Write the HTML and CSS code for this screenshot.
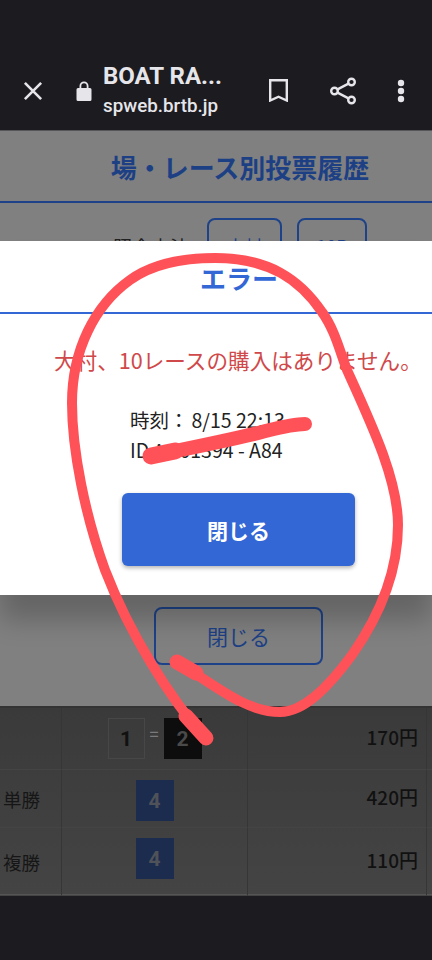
FILE: index.html
```html
<!DOCTYPE html>
<html lang="ja">
<head>
<meta charset="utf-8">
<title>BOAT RACE</title>
<link rel="stylesheet" href="styles.css">
</head>
<body>
<div class="screen">
  <header class="topbar">
    <svg class="ico ico-close" viewBox="0 0 24 24"><path d="M4.500 4.500l15 15M19.500 4.500l-15 15"/></svg>
    <svg class="ico ico-lock" viewBox="0 0 16 20"><path class="solid" d="M3.500 7V5a4.500 4.500 0 0 1 9 0v2h-1.800V5a2.700 2.700 0 0 0-5.400 0v2zM2 7h12a1.500 1.500 0 0 1 1.500 1.500v10A1.500 1.500 0 0 1 14 20H2A1.500 1.500 0 0 1 .5 18.500v-10A1.500 1.500 0 0 1 2 7z"/></svg>
    <div class="site">
      <div class="site-name">BOAT RA...</div>
      <div class="site-url">spweb.brtb.jp</div>
    </div>
    <svg class="ico ico-mark" viewBox="0 0 19 23"><path d="M1.200 1.200h16.600v20.300l-8.300-3.800-8.300 3.800z"/></svg>
    <svg class="ico ico-share" viewBox="0 0 26 28"><circle cx="21.500" cy="5" r="3.300"/><circle cx="4.500" cy="14" r="3.300"/><circle cx="21.500" cy="23" r="3.300"/><path d="M7.500 12.400l11-5.800M7.500 15.600l11 5.800"/></svg>
    <svg class="ico ico-more" viewBox="0 0 8 24"><circle class="solid" cx="4" cy="4" r="3.200"/><circle class="solid" cx="4" cy="12" r="3.200"/><circle class="solid" cx="4" cy="20" r="3.200"/></svg>
  </header>

  <main class="page">
    <h1 class="page-title">場・レース別投票履歴</h1>
    <div class="filter">
      <span class="filter-label">照会方法</span>
      <span class="filter-btn filter-place">大村</span>
      <span class="filter-btn filter-race">10R</span>
    </div>
    <div class="close-wrap"><button class="close-outline">閉じる</button></div>

    <div class="table">
      <div class="cell"></div>
      <div class="cell cell-mid">
        <span class="chip chip-white">1</span><span class="eq">=</span><span class="chip chip-black">2</span>
      </div>
      <div class="cell cell-yen">170円</div>
      <div class="cell cell-end"></div>

      <div class="cell cell-name">単勝</div>
      <div class="cell cell-mid"><span class="chip chip-blue">4</span></div>
      <div class="cell cell-yen">420円</div>
      <div class="cell cell-end"></div>

      <div class="cell cell-name">複勝</div>
      <div class="cell cell-mid"><span class="chip chip-blue">4</span></div>
      <div class="cell cell-yen">110円</div>
      <div class="cell cell-end"></div>
    </div>

    <section class="modal">
      <h2 class="modal-title">エラー</h2>
      <p class="modal-error">大村、10レースの購入はありません。</p>
      <p class="modal-info">時刻：<span class="modal-time">8/15 22:13</span><br>ID：001394 - A84</p>
      <button class="modal-btn">閉じる</button>
    </section>
  </main>

  <footer class="navbar"></footer>

  <svg class="scribble" viewBox="0 0 432 960">
    <path class="loop" d="M205 738C170 698 130 635 105 570C85 515 72 450 72 403C72 350 95 305 130 280C155 262 190 258 215 258C270 258 300 280 322 312C335 330 340 352 347 370C372 425 398 480 398 525C398 570 380 615 352 655C330 685 305 712 280 712C245 712 215 685 177 662"/>
    <path class="tail" d="M206 738L186 716"/>
    <path class="tail" d="M177 662L196 673"/>
    <path class="strike" d="M151 456C190 448 230 440 262 432C278 428 292 424 305 424"/>
    <path class="strike-end" d="M151 456L175 451"/>
  </svg>
</div>
</body>
</html>
```
FILE: styles.css
```css
* { box-sizing: border-box; }
html, body { margin: 0; padding: 0; }
body {
  width: 432px;
  height: 960px;
  overflow: hidden;
  background: #1b1b20;
  font-family: "Noto Sans CJK JP", "Noto Sans", sans-serif;
}
.screen {
  position: relative;
  width: 432px;
  height: 960px;
  display: flex;
  flex-direction: column;
  overflow: hidden;
}

/* browser toolbar */
.topbar {
  flex: none;
  height: 131px;
  padding-top: 53px;
  padding-bottom: 2px;
  display: flex;
  align-items: center;
  background: #1b1b20;
  border-bottom: 1px solid #55555a;
  color: #e6e6ea;
  font-family: Roboto, sans-serif;
}
.ico {
  flex: none;
  fill: none;
  stroke: #e6e6ea;
  stroke-width: 2.400;
}
.ico .solid { fill: #e6e6ea; stroke: none; }
.ico-close { width: 26px; height: 26px; margin-left: 20px; }
.ico-lock { width: 16px; height: 20px; margin-left: 30px; }
.site { width: 160px; margin-left: 11px; }
.site-name { font-size: 24px; font-weight: 700; line-height: 30px; }
.site-url { font-size: 18.800px; font-weight: 500; line-height: 30px; }
.ico-mark { width: 19px; height: 23px; margin-left: 6px; stroke-width: 2.400; }
.ico-share { width: 26px; height: 28px; margin-left: 42px; stroke-width: 2.400; }
.ico-more { width: 8px; height: 24px; margin-left: 41px; }

/* page behind the dialog */
.page {
  flex: 1;
  min-height: 0;
  position: relative;
  background: #808080;
  display: flex;
  flex-direction: column;
}
.page-title {
  margin: 0;
  height: 70px;
  padding-left: 48px;
  text-align: center;
  font-size: 26px;
  line-height: 71px;
  font-weight: 700;
  color: #1d4085;
  border-bottom: 2px solid #1d4289;
  box-sizing: content-box;
}
.filter {
  flex: none;
  height: 404px;
  padding-top: 15px;
  display: flex;
  align-items: flex-start;
}
.filter-label {
  margin-left: 113px;
  width: 94px;
  font-size: 19px;
  line-height: 58px;
  color: #222;
}
.filter-btn {
  height: 60px;
  border: 2px solid #1d4289;
  border-radius: 8px;
  text-align: center;
  font-size: 18px;
  line-height: 52px;
  color: #1d4085;
}
.filter-place { width: 75px; }
.filter-race { width: 70px; margin-left: 15px; }

.close-wrap {
  flex: none;
  height: 99px;
  padding-left: 154px;
}
.close-outline {
  display: block;
  width: 169px;
  height: 58px;
  padding: 0;
  background: transparent;
  border: 2px solid #1d4289;
  border-radius: 8px;
  font: 400 21px "Noto Sans CJK JP", sans-serif;
  color: #1d4085;
}

/* results table */
.table {
  flex: none;
  height: 190px;
  display: grid;
  grid-template-columns: 62px 186px 179px 5px;
  grid-template-rows: 62px 58px 68px;
  background: linear-gradient(#3a3a3a, #444);
  border-top: 2px solid #333;
  border-bottom: 2px solid #555;
}
.cell {
  border-right: 1px solid #363636;
  border-bottom: 1px solid #444;
  display: flex;
  align-items: center;
  color: #111;
  font-size: 18.500px;
}
.cell-end { border-right: 0; }
.cell-name { padding-left: 3px; white-space: nowrap; color: #161616; }
.cell-mid { justify-content: center; align-items: flex-start; padding-top: 10px; }
.cell-yen { justify-content: flex-end; padding-right: 8px; font-size: 19px; font-weight: 500; padding-bottom: 4px; }
.chip {
  width: 38px;
  height: 41px;
  display: flex;
  align-items: center;
  justify-content: center;
  font: 700 21px Roboto, sans-serif;
}
.chip-white { width: 37px; border: 1px solid #474747; color: #111; }
.chip-black { background: #0d0d0d; color: #4a4a4a; }
.chip-blue { background: #1b2c4f; color: #4f5258; }
.eq { width: 19px; text-align: center; font-size: 16px; font-weight: 500; color: #7a7a7a; line-height: 30px; }

/* error dialog */
.modal {
  position: absolute;
  left: 0;
  right: 0;
  top: 110px;
  height: 354px;
  background: #fff;
  box-shadow: 0 25px 25px rgba(0, 0, 0, .22);
}
.modal-title {
  margin: 0;
  height: 73px;
  padding: 12px 0 0 46px;
  text-align: center;
  font-size: 26px;
  line-height: 50px;
  font-weight: 700;
  color: #3367d6;
  border-bottom: 2px solid #3367d6;
}
.modal-error {
  margin: 30px 0 0 54px;
  white-space: nowrap;
  font-size: 21.600px;
  line-height: 32px;
  color: #d0494a;
}
.modal-info {
  margin: 29px 0 0 130px;
  font-size: 19.500px;
  line-height: 30px;
  color: #222;
}
.modal-time { margin-left: 3px; }
.modal-btn {
  display: block;
  width: 233px;
  height: 73px;
  margin: 28px 0 0 122px;
  padding: 0;
  background: #3367d6;
  border: 0;
  border-radius: 6px;
  box-shadow: 0 2px 4px rgba(0, 0, 0, .3);
  font: 700 21px "Noto Sans CJK JP", sans-serif;
  color: #fff;
}

.navbar {
  flex: none;
  height: 64px;
  background: #1b1b20;
}

/* hand-drawn marker strokes on top of the screenshot */
.scribble {
  position: absolute;
  left: 0;
  top: 0;
  width: 432px;
  height: 960px;
  fill: none;
  stroke: #fe5258;
  stroke-linecap: round;
  stroke-linejoin: round;
  pointer-events: none;
}
.loop { stroke-width: 10; }
.tail { stroke-width: 15; }
.strike { stroke-width: 14; }
.strike-end { stroke-width: 17; }
```
